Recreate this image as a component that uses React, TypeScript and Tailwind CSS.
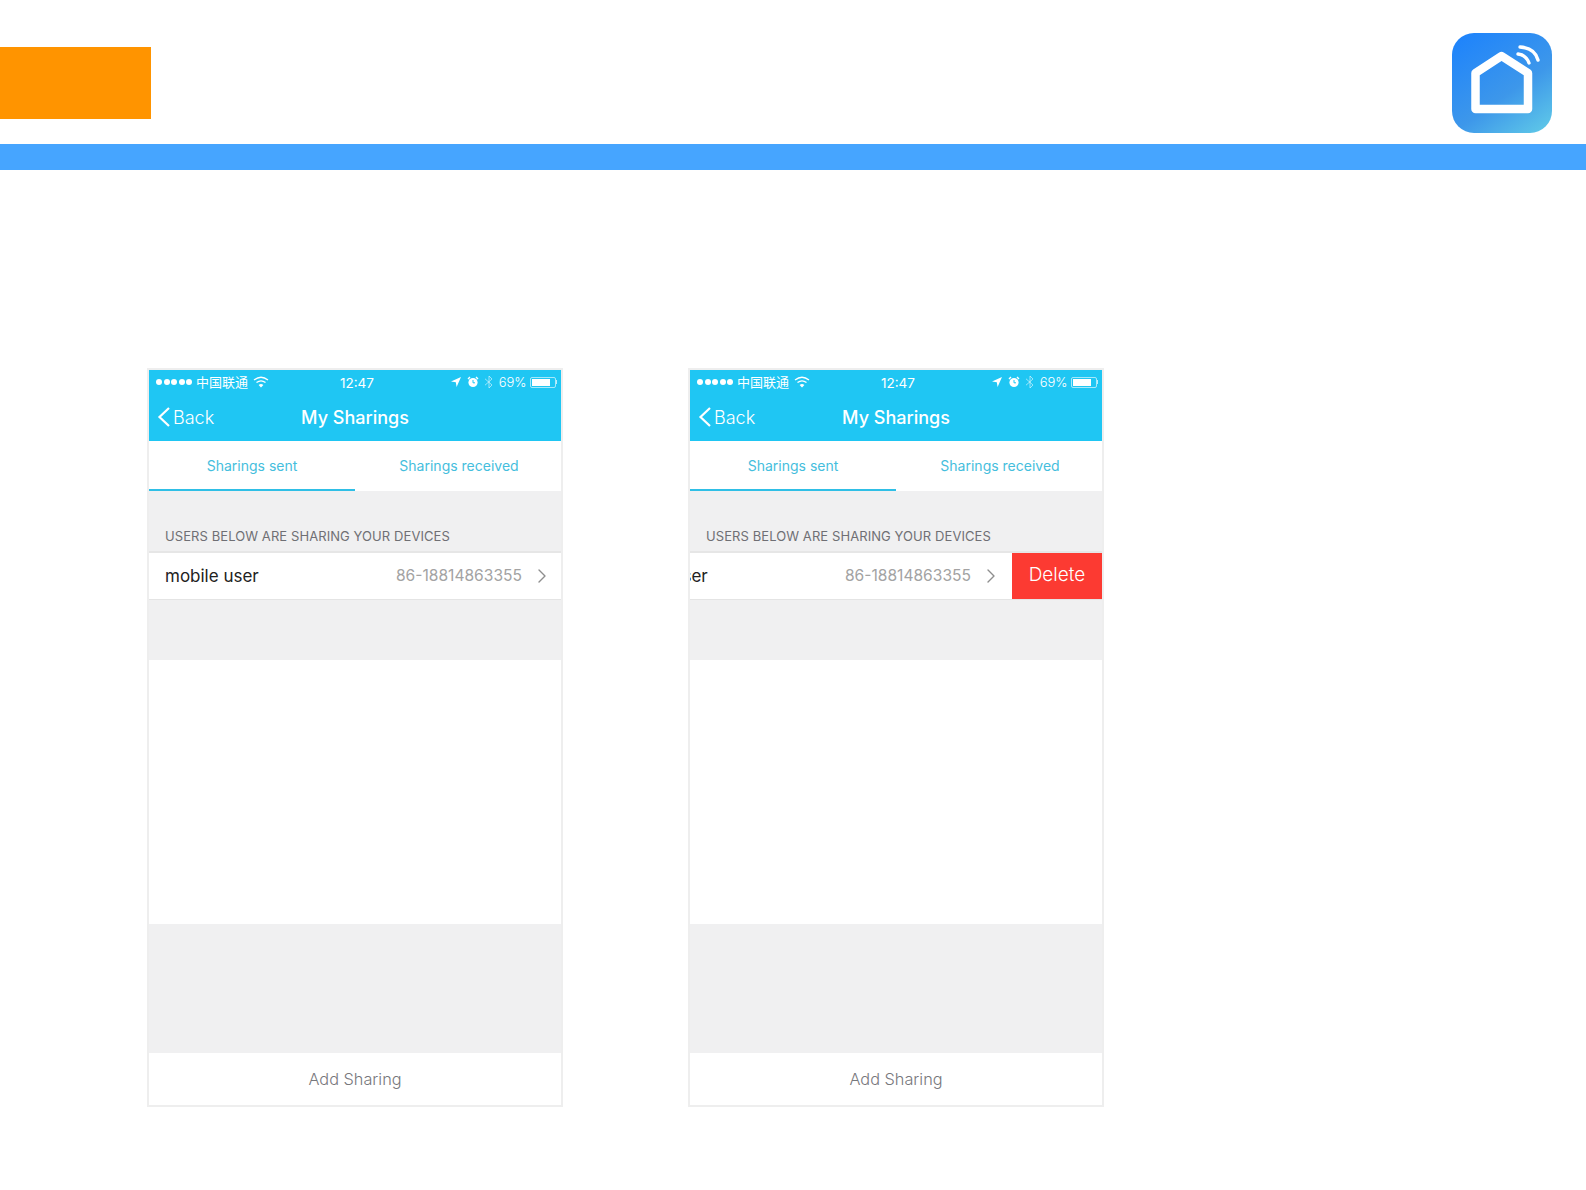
import { ChevronRight } from "lucide-react";

const AppLogo = () => (
  <svg width="100" height="100" viewBox="0 0 100 100" className="mt-[33px] mr-[34px]">
    <defs>
      <linearGradient id="logoFill" x1="0.15" y1="0" x2="0.85" y2="1">
        <stop offset="0" stopColor="#1f84fb" />
        <stop offset="0.6" stopColor="#3d97ea" />
        <stop offset="1" stopColor="#5cc4e8" />
      </linearGradient>
    </defs>
    <rect width="100" height="100" rx="22" fill="url(#logoFill)" />
    <path d="M49.5 23 L76 40 V76 H23.5 V40 Z" fill="none" stroke="#fff" strokeWidth="8.5" strokeLinejoin="round" />
    <path d="M66 21 Q74 22 77 30" fill="none" stroke="#fff" strokeWidth="3.4" strokeLinecap="round" />
    <path d="M68 14 Q83 15 86 27" fill="none" stroke="#fff" strokeWidth="3.4" strokeLinecap="round" />
  </svg>
);

const StatusBar = () => (
  <div className="relative flex h-[24px] items-center pl-[7px] pr-[4px] text-[13px] leading-none text-white">
    <div className="flex gap-[1.5px]">
      {[0, 1, 2, 3, 4].map((i) => (
        <span key={i} className="h-[6px] w-[6px] rounded-full bg-white" />
      ))}
    </div>
    <span className="ml-[4px]">中国联通</span>
    <svg width="16" height="12" viewBox="0 0 16 12" className="ml-[5px]" fill="none" stroke="#fff" strokeWidth="1.3">
      <path d="M1 4 Q8 -1.5 15 4" />
      <path d="M3.5 6.6 Q8 3 12.5 6.6" />
      <path d="M8 11.5 L5.6 8.9 Q8 7.2 10.4 8.9 Z" fill="#fff" stroke="none" />
    </svg>
    <span className="absolute left-[190px] top-[7px] w-[36px] text-center text-[13.5px]">12:47</span>
    <div className="ml-auto flex items-center">
      <svg width="10" height="10" viewBox="0 0 10 10">
        <path d="M10 0 L0 4.6 L4.8 5.2 L5.6 10 Z" fill="#fff" />
      </svg>
      <svg width="12" height="12" viewBox="0 0 12 12" className="ml-[6px]">
        <circle cx="6" cy="6.5" r="4.6" fill="#fff" />
        <path d="M1 3 L3 1 M11 3 L9 1" stroke="#fff" strokeWidth="1.4" />
        <path d="M6 4 V6.8 H8" stroke="#1fc6f3" strokeWidth="1" fill="none" />
      </svg>
      <svg width="10" height="14" viewBox="0 0 10 14" className="ml-[5px]" fill="none" stroke="#fff" strokeOpacity="0.55" strokeWidth="1">
        <path d="M1 3.8 L8 10 L5 13 V1 L8 4 L1 10.2" />
      </svg>
      <span className="ml-[5px] font-light">69%</span>
      <div className="ml-[3px] flex items-center">
        <div className="h-[11px] w-[26px] rounded-[2px] border border-white/60 p-[1px]">
          <div className="h-full w-[18px] bg-white" />
        </div>
        <div className="h-[4px] w-[1.5px] bg-white/70" />
      </div>
    </div>
  </div>
);

const Phone = ({ swiped = false }: { swiped?: boolean }) => (
  <div className="flex w-[416px] flex-col border-2 border-[#eeeeee] bg-white font-['Inter','Noto_Sans_CJK_SC',sans-serif]">
    <div className="h-[71px] bg-[#1fc6f3]">
      <StatusBar />
      <div className="relative flex h-[47px] items-center justify-center pb-[1px] text-white">
        <div className="absolute left-[8px] flex items-center">
          <svg width="14" height="20" viewBox="0 0 14 20" fill="none" stroke="#fff" strokeWidth="2.2">
            <path d="M12 1 L2.5 10 L12 19" />
          </svg>
          <span className="ml-[2px] text-[18px] font-light">Back</span>
        </div>
        <span className="text-[18px] font-medium">My Sharings</span>
      </div>
    </div>

    <div className="flex h-[50px] text-[14px] text-[#45bedd]">
      <div className="flex w-1/2 items-center justify-center border-b-2 border-[#2fbfe6]">Sharings sent</div>
      <div className="flex w-1/2 items-center justify-center pb-[2px] pl-[2px]">Sharings received</div>
    </div>

    <div className="flex h-[60px] items-end bg-[#f0f0f1] pb-[7px] pl-[16px] text-[13px] leading-[16px] tracking-[0.08px] text-[#6f6f74]">
      USERS BELOW ARE SHARING YOUR DEVICES
    </div>

    <div className="flex h-[49px] overflow-hidden border-t-2 border-b border-t-[#e6e6e6] border-b-[#e4e4e4] bg-white">
      <div className={`flex w-[412px] shrink-0 items-center pl-[16px] pr-[7px] ${swiped ? "-ml-[92px]" : ""}`}>
        <span className="mt-[1px] text-[17px] text-[#222222]">mobile user</span>
        <span className="ml-auto text-[15.6px] text-[#a3a3a3]">86-18814863355</span>
        <ChevronRight size={24} strokeWidth={1.4} className="ml-[8px] text-[#8e8e8e]" />
      </div>
      {swiped && (
        <div className="-mt-[2px] -mb-px ml-[2px] flex w-[90px] shrink-0 items-center justify-center bg-[#fc3a32] text-[19px] font-light text-white">
          Delete
        </div>
      )}
    </div>

    <div className="h-[60px] bg-[#f0f0f1]" />
    <div className="h-[264px] bg-white" />
    <div className="h-[129px] bg-[#f0f0f1]" />

    <div className="flex h-[52px] items-center justify-center pt-[1px] text-[16.3px] font-light text-[#77777c]">Add Sharing</div>
  </div>
);

export default function App() {
  return (
    <div className="min-h-[1190px] bg-white">
      <div className="flex h-[144px] items-start justify-between">
        <div className="mt-[47px] h-[72px] w-[151px] bg-[#ff9400]" />
        <AppLogo />
      </div>
      <div className="h-[26px] bg-[#46a5ff]" />

      <div className="mt-[198px] flex gap-[125px] pl-[147px]">
        <Phone />
        <Phone swiped />
      </div>
    </div>
  );
}
